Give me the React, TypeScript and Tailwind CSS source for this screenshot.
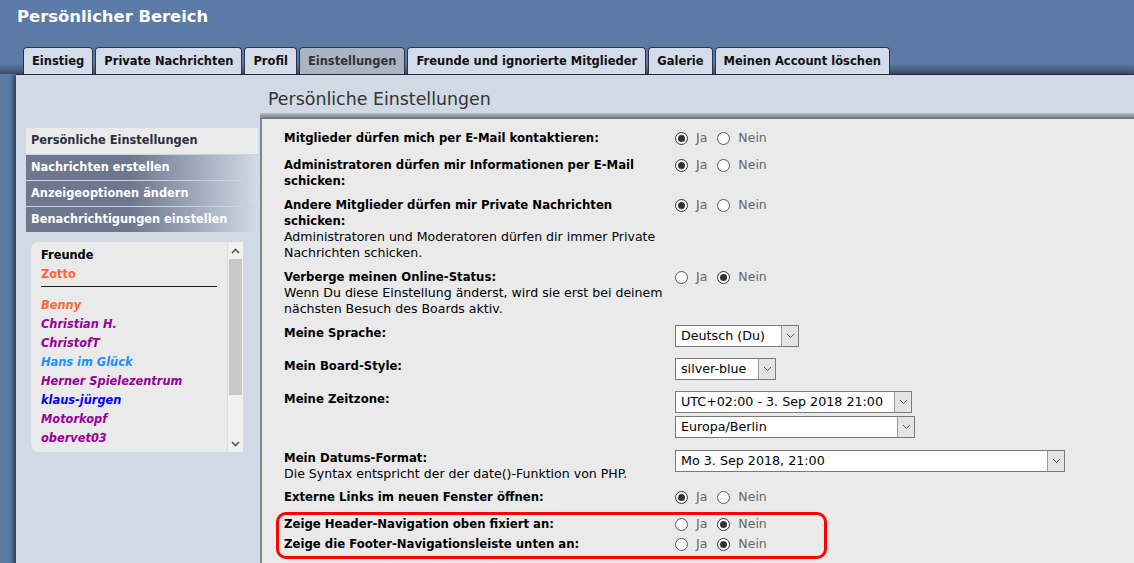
import React from "react";

const tabs = [
  { label: "Einstieg" },
  { label: "Private Nachrichten" },
  { label: "Profil" },
  { label: "Einstellungen", active: true },
  { label: "Freunde und ignorierte Mitglieder" },
  { label: "Galerie" },
  { label: "Meinen Account löschen" },
];

const menu = ["Nachrichten erstellen", "Anzeigeoptionen ändern", "Benachrichtigungen einstellen"];

const friends = [
  { name: "Benny", color: "text-[#ff6633]" },
  { name: "Christian H.", color: "text-[#990099]" },
  { name: "ChristofT", color: "text-[#990099]" },
  { name: "Hans im Glück", color: "text-[#1e90ff]" },
  { name: "Herner Spielezentrum", color: "text-[#990099]" },
  { name: "klaus-jürgen", color: "text-[#0000ff]" },
  { name: "Motorkopf", color: "text-[#990099]" },
  { name: "obervet03", color: "text-[#990099]" },
];

function Radio({ checked }: { checked: boolean }) {
  return (
    <span
      className={`inline-flex h-[13px] w-[13px] items-center justify-center rounded-full border bg-white ${
        checked ? "border-[#333]" : "border-[#555]"
      }`}
    >
      {checked && <span className="h-[7px] w-[7px] rounded-full bg-[#333]" />}
    </span>
  );
}

function YesNo({ yes }: { yes: boolean }) {
  return (
    <div className="flex h-[16px] items-center text-[12.5px] text-[#666]">
      <Radio checked={yes} />
      <span className="ml-[8px]">Ja</span>
      <span className="ml-[10px] flex">
        <Radio checked={!yes} />
      </span>
      <span className="ml-[8px]">Nein</span>
    </div>
  );
}

function Select({ value, width }: { value: string; width: string }) {
  return (
    <div className={`flex h-[22px] border border-[#7a7a7a] bg-white ${width}`}>
      <span className="flex-1 truncate pl-[5px] text-[12.7px] leading-[20px] text-black">{value}</span>
      <span className="flex w-[17px] items-center justify-center border-l border-[#9a9a9a] bg-[#e4e4e4]">
        <svg width="9" height="6" viewBox="0 0 9 6">
          <path d="M1 1 L4.5 4.5 L8 1" fill="none" stroke="#555" strokeWidth="1" />
        </svg>
      </span>
    </div>
  );
}

function Row({
  gap,
  label,
  explain,
  children,
}: {
  gap: string;
  label: React.ReactNode;
  explain?: React.ReactNode;
  children: React.ReactNode;
}) {
  return (
    <div className={`flex ${gap}`}>
      <div className="w-[391px] shrink-0 pr-[8px] leading-[16px] text-black">
        <div className="text-[11.7px] font-bold">{label}</div>
        {explain && <div className="text-[12.55px]">{explain}</div>}
      </div>
      <div className="flex flex-col gap-[3px]">{children}</div>
    </div>
  );
}

export default function App() {
  return (
    <div className="relative h-[563px] w-[1134px] overflow-hidden bg-[#5b7aa6] font-['DejaVu_Sans',Verdana,sans-serif]">
      <div className="h-[47px] pl-[17px] pt-[5px] text-[16.4px] font-bold text-white">Persönlicher Bereich</div>

      <div className="flex h-[27px] items-end gap-[2px] bg-gradient-to-b from-transparent from-60% to-[#3d4d6a] pl-[23px]">
        {tabs.map((t) => (
          <div
            key={t.label}
            className={`h-[27px] rounded-t-[4px] border border-b-0 border-[#2b3444] px-[8px] text-[11.5px] font-bold leading-[26px] ${
              t.active ? "bg-[#a9b5c2] text-[#333]" : "bg-[#d3dce8] text-[#111]"
            }`}
          >
            {t.label}
          </div>
        ))}
      </div>
      <div className="ml-[16px] h-[1px] bg-[#2b3343]" />

      <div className="ml-[16px] flex h-[500px] bg-[#d1dae4] shadow-[-3px_0_4px_rgba(0,0,0,0.45)]">
        <div className="w-[246px] shrink-0 pt-[53px]">
          <div className="ml-[10px] mr-[4px]">
            <div className="flex h-[26px] items-center bg-[#eaeaea] pl-[5px] text-[11.4px] font-bold text-[#2a3040]">
              Persönliche Einstellungen
            </div>
            {menu.map((m) => (
              <div
                key={m}
                className="flex h-[26px] items-center border-t border-[#c9d2de] bg-gradient-to-r from-[#6d788e] from-45% to-[#d2dbe6] pl-[5px] text-[11.4px] font-bold text-white"
              >
                {m}
              </div>
            ))}
          </div>

          <div className="ml-[15px] mt-[10px] flex h-[210px] w-[212px] overflow-hidden rounded-l-[8px] bg-[#eaeaea]">
            <div className="flex-1 pl-[10px] pt-[4px] text-[11.4px] font-bold leading-[19px]">
              <div className="text-black">Freunde</div>
              <div className="text-[#ff6633]">Zotto</div>
              <div className="mr-[10px] mt-[2px] h-[1px] bg-[#222]" />
              <div className="mt-[9px] italic">
                {friends.map((f) => (
                  <div key={f.name} className={f.color}>
                    {f.name}
                  </div>
                ))}
              </div>
            </div>
            <div className="flex w-[16px] flex-col border-l border-[#ddd] bg-[#f0f0f0]">
              <div className="flex h-[17px] items-center justify-center">
                <svg width="9" height="6" viewBox="0 0 9 6">
                  <path d="M1 5 L4.5 1.5 L8 5" fill="none" stroke="#555" strokeWidth="1.6" />
                </svg>
              </div>
              <div className="mx-[1px] h-[136px] bg-[#c8c8c8]" />
              <div className="flex-1" />
              <div className="flex h-[17px] items-center justify-center">
                <svg width="9" height="6" viewBox="0 0 9 6">
                  <path d="M1 1 L4.5 4.5 L8 1" fill="none" stroke="#555" strokeWidth="1.6" />
                </svg>
              </div>
            </div>
          </div>
        </div>

        <div className="flex flex-1 flex-col">
          <div className="flex h-[38px] items-end pb-[3px] pl-[6px] text-[17.4px] leading-[22px] text-[#333]">
            Persönliche Einstellungen
          </div>
          <div className="ml-[-2px] h-[6px] bg-gradient-to-b from-[#b7bcc4] to-[#6b7079]" />
          <div className="ml-[-2px] flex-1 border-l-[2px] border-[#80868f] bg-[#eaeaea] pl-[22px] pt-[11px]">
            <Row gap="" label="Mitglieder dürfen mich per E-Mail kontaktieren:">
              <YesNo yes />
            </Row>
            <Row gap="mt-[11px]" label={<>Administratoren dürfen mir Informationen per E-Mail<br />schicken:</>}>
              <YesNo yes />
            </Row>
            <Row
              gap="mt-[8px]"
              label={<>Andere Mitglieder dürfen mir Private Nachrichten<br />schicken:</>}
              explain={<>Administratoren und Moderatoren dürfen dir immer Private<br />Nachrichten schicken.</>}
            >
              <YesNo yes />
            </Row>
            <Row
              gap="mt-[8px]"
              label="Verberge meinen Online-Status:"
              explain={<>Wenn Du diese Einstellung änderst, wird sie erst bei deinem<br />nächsten Besuch des Boards aktiv.</>}
            >
              <YesNo yes={false} />
            </Row>
            <Row gap="mt-[8px]" label="Meine Sprache:">
              <Select value="Deutsch (Du)" width="w-[124px]" />
            </Row>
            <Row gap="mt-[11px]" label="Mein Board-Style:">
              <Select value="silver-blue" width="w-[101px]" />
            </Row>
            <Row gap="mt-[11px]" label="Meine Zeitzone:">
              <Select value="UTC+02:00 - 3. Sep 2018 21:00" width="w-[237px]" />
              <Select value="Europa/Berlin" width="w-[240px]" />
            </Row>
            <Row
              gap="mt-[12px]"
              label="Mein Datums-Format:"
              explain="Die Syntax entspricht der der date()-Funktion von PHP."
            >
              <Select value="Mo 3. Sep 2018, 21:00" width="w-[390px]" />
            </Row>
            <Row gap="mt-[7px]" label="Externe Links im neuen Fenster öffnen:">
              <YesNo yes />
            </Row>
            <Row gap="mt-[11px]" label="Zeige Header-Navigation oben fixiert an:">
              <YesNo yes={false} />
            </Row>
            <Row gap="mt-[4px]" label="Zeige die Footer-Navigationsleiste unten an:">
              <YesNo yes={false} />
            </Row>
          </div>
        </div>
      </div>

      <div className="pointer-events-none absolute left-[276px] top-[512px] h-[47px] w-[551px] rounded-[10px] border-[3px] border-[#ff0000]" />
    </div>
  );
}
